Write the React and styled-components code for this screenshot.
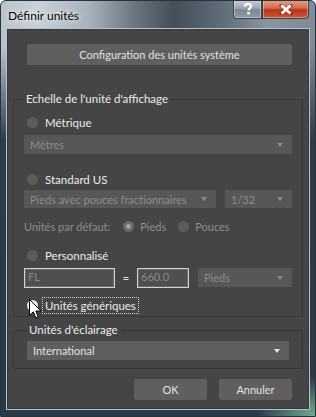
import React from 'react';
import styled, { createGlobalStyle } from 'styled-components';

const GlobalStyle = createGlobalStyle`
  html, body { margin: 0; padding: 0; background: #ffffff; }
  body { font-family: Lato, "Liberation Sans", sans-serif; font-size: 12px; }
`;

const Window = styled.div`
  width: 316px;
  height: 417px;
  box-sizing: border-box;
  display: flex;
  flex-direction: column;
  border-radius: 6px 6px 0 0;
  border: 1px solid #2a323b;
  background:
    radial-gradient(60px 40px at 100% 100%, rgba(120, 185, 150, 0.9), rgba(120, 185, 150, 0) 100%),
    linear-gradient(180deg, rgba(44, 58, 72, 0) 0px, rgba(44, 58, 72, 0) 45px, #2e3c4a 140px, #2b3846 100%),
    linear-gradient(90deg, #b9c3cd 0%, #c9d1d9 12%, #a8b2bc 28%, #6c7782 42%, #434e59 55%, #5f6b77 70%, #8996a2 85%, #7e8b97 100%);
  overflow: hidden;
`;

const TitleBar = styled.div`
  height: 28px;
  display: flex;
  align-items: flex-start;
  justify-content: space-between;
  flex-shrink: 0;
`;

const Title = styled.div`
  color: #000;
  font-size: 12px;
  padding: 7px 0 0 7px;
  text-shadow: 0 0 8px rgba(255,255,255,0.9), 0 0 3px rgba(255,255,255,0.8);
`;

const Caption = styled.div`
  display: flex;
  margin-right: 6px;
  margin-top: -1px;
`;

const CapButton = styled.div`
  height: 19px;
  width: ${p => p.$w}px;
  display: flex;
  align-items: center;
  justify-content: center;
  border: 1px solid #3b4047;
  box-sizing: border-box;
  border-top: none;
  background: ${p => p.$red
    ? 'linear-gradient(180deg, #e6a08a 0%, #d66a4d 45%, #b7341a 55%, #cf5a3a 100%)'
    : 'linear-gradient(180deg, #c9d0d7 0%, #9ea8b2 45%, #7b8691 55%, #8f9aa5 100%)'};
  border-radius: ${p => p.$red ? '0 0 4px 0' : '0 0 0 4px'};
  box-shadow: inset 0 0 0 1px rgba(255,255,255,0.35);
`;

const Client = styled.div`
  margin: 0 6px;
  height: 380px;
  background: #454545;
  border: 1px solid #333a40;
  box-sizing: border-box;
  box-shadow: 0 0 0 1px #b7c3ce;
  display: flex;
  flex-direction: column;
  color: #e6e6e6;
  font-size: 11px;
`;

const BigButton = styled.div`
  margin: 14px 16px 0 19px;
  height: 21px;
  border-radius: 2px;
  background: #5f5f5f;
  display: flex;
  align-items: center;
  justify-content: center;
  color: #e2e2e2;
`;

const Group = styled.fieldset`
  margin: ${p => p.$top}px 5px 0 5px;
  padding: ${p => p.$pt}px ${p => p.$px}px ${p => p.$pb}px ${p => p.$px}px;
  border: 1px solid #363636;
  border-radius: 3px;
  min-width: 0;
`;

const Legend = styled.legend`
  padding: 0 3px 0 1px;
  margin-left: 1px;
  color: #ececec;
  font-size: 11.5px;
  line-height: 14px;
`;

const Row = styled.div`
  display: flex;
  align-items: center;
  gap: ${p => p.$gap || 0}px;
  height: ${p => p.$h || 16}px;
  margin-top: ${p => p.$mt || 0}px;
`;

const Radio = styled.span`
  width: 11px;
  height: 11px;
  border-radius: 50%;
  flex-shrink: 0;
  margin: 0 ${p => p.$mr ?? 7}px 0 ${p => p.$ml ?? 3}px;
  background: ${p => p.$checked
    ? (p.$disabled ? 'radial-gradient(circle, #a0a0a0 0 2px, #6a6a6a 3px)' : 'radial-gradient(circle, #ffffff 0 3px, #e8e8e8 4px)')
    : '#5c5c5c'};
`;

const Label = styled.span`
  color: ${p => p.$disabled ? '#8d8d8d' : '#ececec'};
  white-space: nowrap;
  font-size: ${p => p.$disabled ? 11 : 11.5}px;
`;

const FocusLabel = styled.span`
  color: #ececec;
  font-size: 11.5px;
  outline: 1px dotted #cfcfcf;
  padding: 1px 2px;
  margin-left: -2px;
`;

const Select = styled.div`
  box-sizing: border-box;
  height: ${p => p.$h || 19}px;
  width: ${p => p.$w ? p.$w + 'px' : 'auto'};
  flex: ${p => p.$w ? '0 0 auto' : '1'};
  background: ${p => p.$disabled ? '#575757' : '#5e5e5e'};
  color: ${p => p.$disabled ? '#8d8d8d' : '#e2e2e2'};
  display: flex;
  align-items: center;
  justify-content: space-between;
  padding: 0 9px 0 6px;
  border-radius: 1px;
  white-space: nowrap;
  overflow: hidden;
`;

const Arrow = styled.span`
  width: 0;
  height: 0;
  flex-shrink: 0;
  margin-left: 6px;
  border-left: 3.5px solid transparent;
  border-right: 3.5px solid transparent;
  border-top: 4px solid ${p => p.$disabled ? '#8a8a8a' : '#e8e8e8'};
`;

const TextBox = styled.div`
  box-sizing: border-box;
  width: ${p => p.$w}px;
  height: 20px;
  border: 1px solid #d2d2d2;
  box-shadow: inset 0 0 0 1px #6a6a6a;
  background: #4f4f4f;
  color: #8a8a8a;
  padding: 0 0 2px 3px;
  display: flex;
  align-items: center;
`;

const Equals = styled.span`
  width: 22px;
  text-align: center;
  color: #e0e0e0;
`;

const Spacer = styled.span`
  width: ${p => p.$w}px;
  flex-shrink: 0;
`;

const Footer = styled.div`
  display: flex;
  justify-content: flex-end;
  gap: 12px;
  margin: 10px 16px 0 0;
`;

const DlgButton = styled.div`
  width: 73px;
  height: 21px;
  border-radius: 2px;
  background: #5f5f5f;
  color: #e2e2e2;
  display: flex;
  align-items: center;
  justify-content: center;
`;

const Cursor = styled.svg`
  position: absolute;
  left: 29px;
  top: 299px;
`;

const Dropdown = ({ text, w, h, disabled }) => (
  <Select $w={w} $h={h} $disabled={disabled}>
    <span>{text}</span>
    <Arrow $disabled={disabled} />
  </Select>
);

export default function App() {
  return (
    <>
      <GlobalStyle />
      <Window>
        <TitleBar>
          <Title>Définir unités</Title>
          <Caption>
            <CapButton $w={29}>
              <svg width="10" height="12" viewBox="0 0 10 12">
                <path d="M2 3.5 C2 1.5 3.5 1 5 1 C6.8 1 8 2 8 3.5 C8 5.2 5.5 5.5 5.5 7.5" fill="none" stroke="#fff" strokeWidth="2.2" />
                <rect x="4.2" y="9" width="2.6" height="2.4" fill="#fff" />
              </svg>
            </CapButton>
            <CapButton $w={47} $red>
              <svg width="14" height="11" viewBox="0 0 14 11">
                <path d="M2 1.5 L12 9.5 M12 1.5 L2 9.5" stroke="#3a1008" strokeWidth="3.6" strokeLinecap="square" opacity="0.35" />
                <path d="M2.5 1.5 L11.5 9.5 M11.5 1.5 L2.5 9.5" stroke="#fff" strokeWidth="2.6" />
              </svg>
            </CapButton>
          </Caption>
        </TitleBar>
        <Client>
          <BigButton>Configuration des unités système</BigButton>

          <Group $top={27} $pt={8} $px={10} $pb={3}>
            <Legend>Echelle de l'unité d'affichage</Legend>
            <Row>
              <Radio />
              <Label>Métrique</Label>
            </Row>
            <Row $h={19} $mt={5}>
              <Dropdown text="Mètres" disabled />
            </Row>
            <Row $mt={17}>
              <Radio />
              <Label>Standard US</Label>
            </Row>
            <Row $h={18} $mt={3} $gap={9}>
              <Dropdown text="Pieds avec pouces fractionnaires" h={18} disabled />
              <Dropdown text="1/32" w={67} h={18} disabled />
            </Row>
            <Row $mt={10}>
              <Label $disabled>Unités par défaut:</Label>
              <Radio $checked $disabled $ml={13} $mr={6} />
              <Label $disabled>Pieds</Label>
              <Radio $ml={12} $mr={6} />
              <Label $disabled>Pouces</Label>
            </Row>
            <Row $mt={13}>
              <Radio />
              <Label>Personnalisé</Label>
            </Row>
            <Row $h={21} $mt={4}>
              <TextBox $w={91}>FL</TextBox>
              <Equals>=</Equals>
              <TextBox $w={52}>660.0</TextBox>
              <Spacer $w={9} />
              <Dropdown text="Pieds" disabled />
            </Row>
            <Row $mt={9}>
              <Radio $checked />
              <FocusLabel>Unités génériques</FocusLabel>
            </Row>
          </Group>

          <Group $top={6} $pt={4} $px={13} $pb={8}>
            <Legend>Unités d'éclairage</Legend>
            <Dropdown text="International" />
          </Group>

          <Footer>
            <DlgButton>OK</DlgButton>
            <DlgButton>Annuler</DlgButton>
          </Footer>
        </Client>
      </Window>
      <Cursor width="13" height="21" viewBox="0 0 13 21">
        <path d="M0.5 0.5 L0.5 16.5 L4.3 12.8 L6.8 18.8 L9.2 17.8 L6.8 12 L12 12 Z" fill="#fff" stroke="#000" strokeWidth="1" strokeLinejoin="round" />
      </Cursor>
    </>
  );
}
